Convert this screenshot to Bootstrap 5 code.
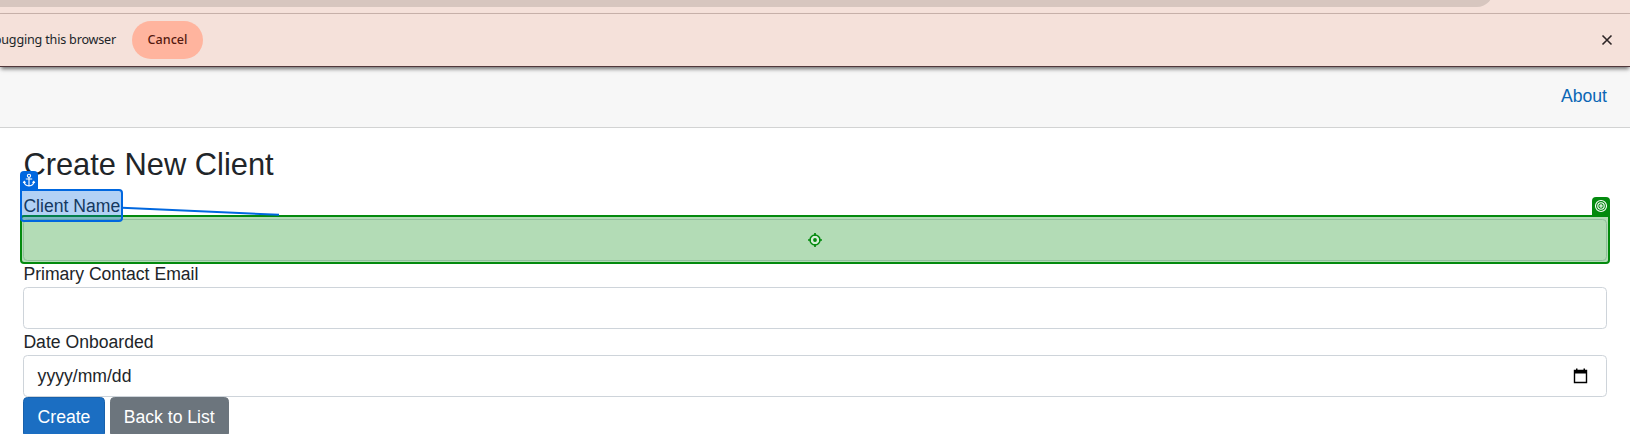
<!DOCTYPE html>
<html lang="en">
<head>
<meta charset="utf-8">
<meta name="viewport" content="width=device-width, initial-scale=1">
<title>Create New Client</title>
<link rel="stylesheet" href="https://cdn.jsdelivr.net/npm/bootstrap@5.3.0/dist/css/bootstrap.min.css">
<style>
html{font-size:17.6px}
body{font-family:"Liberation Sans",Arial,sans-serif;color:#212529;height:434px;overflow:hidden;background:#fff}
.chrome-strip{height:14px;background:#f5e1da;border-bottom:1px solid #c8b2ab}
.address-pill{width:1493px;height:32px;margin-top:-25px;background:#d7c6bf;border-bottom-right-radius:16px}
.debug-bar{height:53px;background:#f5e1da;border-bottom:1px solid #51383b;box-shadow:0 3px 4px -1px rgba(0,0,0,.55);position:relative;z-index:1;font-family:"Noto Sans",sans-serif;font-size:12.6px;padding-right:17px}
.debug-text{width:116px;white-space:nowrap;letter-spacing:-.2px}
.cancel-btn{width:71px;height:38px;margin-left:16px;background:#ffb49e;color:#55190f;font-size:12.6px;font-weight:500}
.site-bar{height:61px;background:#f7f7f7;border-bottom:1px solid #d2d3d3;padding:0 23px 1px}
.site-bar a{color:#0a66b5}
main{padding:18.9px 23.4px 0}
h1.page-title{font-size:30.85px;line-height:36px;font-weight:400;margin:0 0 9.7px}
.field-label{display:block;line-height:26.4px;height:26.4px}
.field-box{height:41.6px;border-color:#ced4da;border-radius:4.4px;padding:6.6px 13.2px}
.btn{border-radius:4.4px;padding:6.6px 13.2px;line-height:26.4px;font-size:17.6px}
.btn-create{background:#1b6ec2;border-color:#1861ac;color:#fff}
.btn-back{background:#6c757d;border-color:#6c757d;color:#fff}
.cal{margin-right:4px}
.label-hit{position:absolute;left:-3px;top:-3.6px;width:103px;height:33px;border:2px solid #0067df;border-radius:4px;border-top-left-radius:0;background:rgba(0,103,223,.3);z-index:3}
.label-hit svg.tag-icon{position:absolute;left:-2px;top:-20px}
.label-hit svg.link-line{position:absolute;left:100px;top:15px}
.field-hit{position:absolute;left:-3px;right:-3px;top:-4px;height:49px;border:2px solid #038a0e;border-radius:4px;border-top-right-radius:0;background:rgba(3,138,14,.3);z-index:2}
.field-hit .tag-icon{position:absolute;right:-2px;top:-20px}
.crosshair{margin-top:2px}
</style>
<script src="https://cdn.jsdelivr.net/npm/bootstrap@5.3.0/dist/js/bootstrap.bundle.min.js"></script>
</head>
<body>
<div class="chrome-strip overflow-hidden"><div class="address-pill"></div></div>
<div class="debug-bar d-flex align-items-center">
  <div class="debug-text d-flex justify-content-end"><span>bugging this browser</span></div>
  <button class="cancel-btn border-0 rounded-pill p-0">Cancel</button>
  <svg class="ms-auto" width="12" height="12" viewBox="0 0 12 12" stroke="#2d2526" stroke-width="1.6"><path d="M1.5 1.5l9 9M10.5 1.5l-9 9"/></svg>
</div>
<header class="site-bar d-flex align-items-center justify-content-end"><a href="#" class="text-decoration-none">About</a></header>
<main>
  <h1 class="page-title">Create New Client</h1>
  <form>
    <div class="position-relative">
      <label class="field-label">Client Name</label>
      <div class="label-hit">
        <svg class="tag-icon" width="18" height="20" viewBox="0 0 18 20"><path fill="#0067df" d="M0 20V4a4 4 0 0 1 4-4h10a4 4 0 0 1 4 4v16z"/><g fill="none" stroke="#fff" stroke-width="1.1"><circle cx="9" cy="4.800" r="1.600"/><path d="M9 6.500V15M5.800 8h6.400M4.200 10.500c0 2.800 2 4.200 4.800 4.500 2.800-.3 4.800-1.700 4.800-4.500M3.200 12l1-1.600 1.400 1.200M14.800 12l-1-1.600-1.400 1.200"/></g></svg>
        <svg class="link-line" width="160" height="12" viewBox="0 0 160 12"><path d="M0 1.700L157 8.800" stroke="#0067df" stroke-width="2"/></svg>
      </div>
      <div class="position-relative">
        <div class="field-box form-control"></div>
        <div class="field-hit d-flex align-items-center justify-content-center">
          <svg class="crosshair" width="14" height="14" viewBox="0 0 14 14" fill="none" stroke="#038a0e"><circle cx="7" cy="7" r="5" stroke-width="1.500" fill="#d6edd7"/><path d="M7 0v3M7 11v3M0 7h3M11 7h3" stroke-width="1.700"/><circle cx="7" cy="7" r="1.900" fill="#038a0e" stroke="none"/></svg>
          <svg class="tag-icon" width="18" height="20" viewBox="0 0 18 20"><path fill="#038a0e" d="M0 20V4a4 4 0 0 1 4-4h10a4 4 0 0 1 4 4v16z"/><g fill="none" stroke="#fff" stroke-width="1.100"><circle cx="9" cy="9" r="5.500"/><circle cx="9" cy="9" r="3.200"/><circle cx="9" cy="9" r="1.100"/></g></svg>
        </div>
      </div>
    </div>
    <label class="field-label">Primary Contact Email</label>
    <div class="field-box form-control"></div>
    <label class="field-label">Date Onboarded</label>
    <div class="field-box form-control d-flex align-items-center justify-content-between"><span>yyyy/mm/dd</span>
      <svg class="cal" width="15" height="16" viewBox="0 0 15 16"><path d="M1.500 2.500h12v12h-12z" fill="none" stroke="#000" stroke-width="1.400"/><path d="M1 2h13v3.500H1zM3 .5h1.500V3H3zM10.500.5H12V3h-1.500z"/></svg>
    </div>
    <div class="d-flex"><button type="button" class="btn btn-create">Create</button><button type="button" class="btn btn-back" style="margin-left:5px">Back to List</button></div>
  </form>
</main>
</body>
</html>
